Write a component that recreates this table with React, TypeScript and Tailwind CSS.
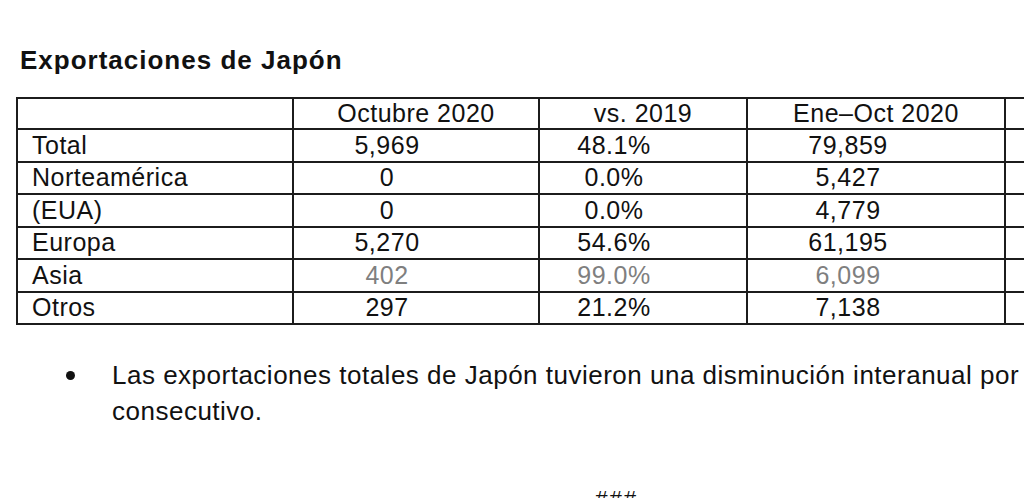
import React from "react";

type Row = { label: string; a: string; b: string; c: string; gray?: boolean; h: string };

const rows: Row[] = [
  { label: "Total", a: "5,969", b: "48.1%", c: "79,859", h: "h-[33px]" },
  { label: "Norteamérica", a: "0", b: "0.0%", c: "5,427", h: "h-[32px]" },
  { label: "(EUA)", a: "0", b: "0.0%", c: "4,779", h: "h-[33px]" },
  { label: "Europa", a: "5,270", b: "54.6%", c: "61,195", h: "h-[32px]" },
  { label: "Asia", a: "402", b: "99.0%", c: "6,099", gray: true, h: "h-[33px]" },
  { label: "Otros", a: "297", b: "21.2%", c: "7,138", h: "h-[32px]" },
];

const font = { fontFamily: '"Liberation Sans", Arial, sans-serif' };

export default function App() {
  return (
    <div className="w-[1024px] h-[498px] overflow-hidden bg-white text-[#111]" style={font}>
      <div className="w-[1240px]">
        <div className="pt-[45px] pl-[20px] text-[26px] leading-[30px] font-bold tracking-[1px]">
          Exportaciones de Japón
        </div>

        <div className="mt-[22px] ml-[16px] border-l-2 border-t-2 border-[#1c1c1c] w-fit text-[25px] tracking-[0.5px]">
          <div className="flex h-[31px]">
            <div className="w-[276px] border-r-2 border-b-2 border-[#1c1c1c]" />
            <div className="w-[246px] border-r-2 border-b-2 border-[#1c1c1c] flex items-center justify-center">
              Octubre 2020
            </div>
            <div className="w-[208px] border-r-2 border-b-2 border-[#1c1c1c] flex items-center justify-center">
              vs. 2019
            </div>
            <div className="w-[258px] border-r-2 border-b-2 border-[#1c1c1c] flex items-center justify-center">
              Ene–Oct 2020
            </div>
            <div className="w-[214px] border-r-2 border-b-2 border-[#1c1c1c] flex items-center justify-center">
              vs. 2019
            </div>
          </div>
          {rows.map((r) => (
            <div key={r.label} className={`flex ${r.h}`}>
              <div className="w-[276px] border-r-2 border-b-2 border-[#1c1c1c] flex items-center pl-[14px]">
                {r.label}
              </div>
              <div
                className={`w-[246px] border-r-2 border-b-2 border-[#1c1c1c] flex items-center justify-center pr-[58px] ${
                  r.gray ? "text-[#7f7f7f]" : ""
                }`}
              >
                {r.a}
              </div>
              <div
                className={`w-[208px] border-r-2 border-b-2 border-[#1c1c1c] flex items-center justify-center pr-[58px] ${
                  r.gray ? "text-[#7f7f7f]" : ""
                }`}
              >
                {r.b}
              </div>
              <div
                className={`w-[258px] border-r-2 border-b-2 border-[#1c1c1c] flex items-center justify-center pr-[56px] ${
                  r.gray ? "text-[#7f7f7f]" : ""
                }`}
              >
                {r.c}
              </div>
              <div
                className={`w-[214px] border-r-2 border-b-2 border-[#1c1c1c] flex items-center justify-center pr-[58px] ${
                  r.gray ? "text-[#7f7f7f]" : ""
                }`}
              >
                &nbsp;
              </div>
            </div>
          ))}
        </div>

        <div className="mt-[32px] flex items-start text-[26px] leading-[36px] tracking-[0.5px]">
          <div className="w-[112px] flex justify-start pl-[66px] pt-[14px]">
            <span className="block w-[9px] h-[9px] rounded-full bg-[#111]" />
          </div>
          <div className="w-[1100px]">
            Las exportaciones totales de Japón tuvieron una disminución interanual por segundo mes
            <br />
            consecutivo.
          </div>
        </div>

        <div className="mt-[52px] pl-[595px] text-[22px] leading-[36px] italic tracking-[2px]">###</div>
      </div>
    </div>
  );
}
